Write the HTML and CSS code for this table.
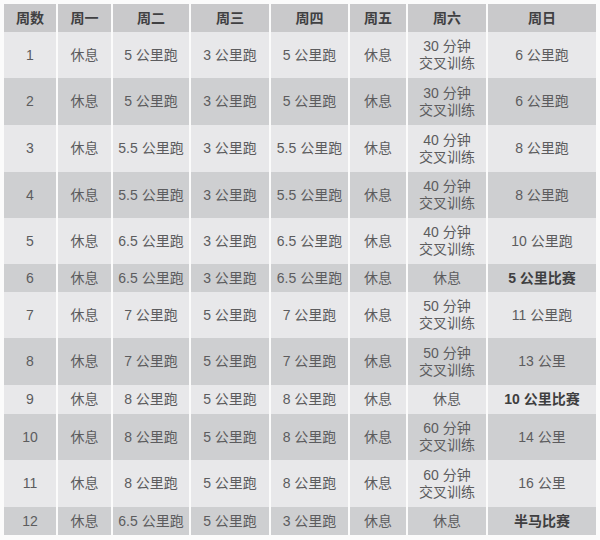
FILE: index.html
```html
<!DOCTYPE html>
<html lang="zh">
<head>
<meta charset="utf-8">
<title>训练计划</title>
<link rel="stylesheet" href="styles.css">
</head>
<body>
<div class="plan">
  <div class="c h">周数</div><div class="c h">周一</div><div class="c h">周二</div><div class="c h">周三</div><div class="c h">周四</div><div class="c h">周五</div><div class="c h">周六</div><div class="c h">周日</div>

  <div class="c l">1</div><div class="c l">休息</div><div class="c l">5 公里跑</div><div class="c l">3 公里跑</div><div class="c l">5 公里跑</div><div class="c l">休息</div><div class="c l">30 分钟<br>交叉训练</div><div class="c l">6 公里跑</div>

  <div class="c d">2</div><div class="c d">休息</div><div class="c d">5 公里跑</div><div class="c d">3 公里跑</div><div class="c d">5 公里跑</div><div class="c d">休息</div><div class="c d">30 分钟<br>交叉训练</div><div class="c d">6 公里跑</div>

  <div class="c l">3</div><div class="c l">休息</div><div class="c l">5.5 公里跑</div><div class="c l">3 公里跑</div><div class="c l">5.5 公里跑</div><div class="c l">休息</div><div class="c l">40 分钟<br>交叉训练</div><div class="c l">8 公里跑</div>

  <div class="c d">4</div><div class="c d">休息</div><div class="c d">5.5 公里跑</div><div class="c d">3 公里跑</div><div class="c d">5.5 公里跑</div><div class="c d">休息</div><div class="c d">40 分钟<br>交叉训练</div><div class="c d">8 公里跑</div>

  <div class="c l">5</div><div class="c l">休息</div><div class="c l">6.5 公里跑</div><div class="c l">3 公里跑</div><div class="c l">6.5 公里跑</div><div class="c l">休息</div><div class="c l">40 分钟<br>交叉训练</div><div class="c l">10 公里跑</div>

  <div class="c d">6</div><div class="c d">休息</div><div class="c d">6.5 公里跑</div><div class="c d">3 公里跑</div><div class="c d">6.5 公里跑</div><div class="c d">休息</div><div class="c d">休息</div><div class="c d b">5 公里比赛</div>

  <div class="c l">7</div><div class="c l">休息</div><div class="c l">7 公里跑</div><div class="c l">5 公里跑</div><div class="c l">7 公里跑</div><div class="c l">休息</div><div class="c l">50 分钟<br>交叉训练</div><div class="c l">11 公里跑</div>

  <div class="c d">8</div><div class="c d">休息</div><div class="c d">7 公里跑</div><div class="c d">5 公里跑</div><div class="c d">7 公里跑</div><div class="c d">休息</div><div class="c d">50 分钟<br>交叉训练</div><div class="c d">13 公里</div>

  <div class="c l">9</div><div class="c l">休息</div><div class="c l">8 公里跑</div><div class="c l">5 公里跑</div><div class="c l">8 公里跑</div><div class="c l">休息</div><div class="c l">休息</div><div class="c l b">10 公里比赛</div>

  <div class="c d">10</div><div class="c d">休息</div><div class="c d">8 公里跑</div><div class="c d">5 公里跑</div><div class="c d">8 公里跑</div><div class="c d">休息</div><div class="c d">60 分钟<br>交叉训练</div><div class="c d">14 公里</div>

  <div class="c l">11</div><div class="c l">休息</div><div class="c l">8 公里跑</div><div class="c l">5 公里跑</div><div class="c l">8 公里跑</div><div class="c l">休息</div><div class="c l">60 分钟<br>交叉训练</div><div class="c l">16 公里</div>

  <div class="c d">12</div><div class="c d">休息</div><div class="c d">6.5 公里跑</div><div class="c d">5 公里跑</div><div class="c d">3 公里跑</div><div class="c d">休息</div><div class="c d">休息</div><div class="c d b">半马比赛</div>
</div>
</body>
</html>
```

FILE: styles.css
```css
html, body {
  margin: 0;
  padding: 0;
  background: #fbfbfb;
}

body {
  padding: 4px 0 0 4px;
  font-family: "Liberation Sans", "Noto Sans CJK SC", sans-serif;
  font-size: 14px;
  color: #5c5c5e;
}

.plan {
  display: grid;
  grid-template-columns: 52px 53px 76px 78px 77px 56px 78px 108px;
  grid-template-rows: 28px 46px 47px 47px 46px 46px 28px 46px 47px 29px 46px 47px 28px;
  column-gap: 2px;
}

.c {
  display: flex;
  align-items: center;
  justify-content: center;
  text-align: center;
  line-height: 17px;
  white-space: nowrap;
}

.h {
  background: #c9c9cb;
  font-weight: bold;
  color: #404042;
}

.l {
  background: #e8e8ea;
}

.d {
  background: #cecfd1;
}

.b {
  font-weight: bold;
  color: #3e3e40;
}
```
